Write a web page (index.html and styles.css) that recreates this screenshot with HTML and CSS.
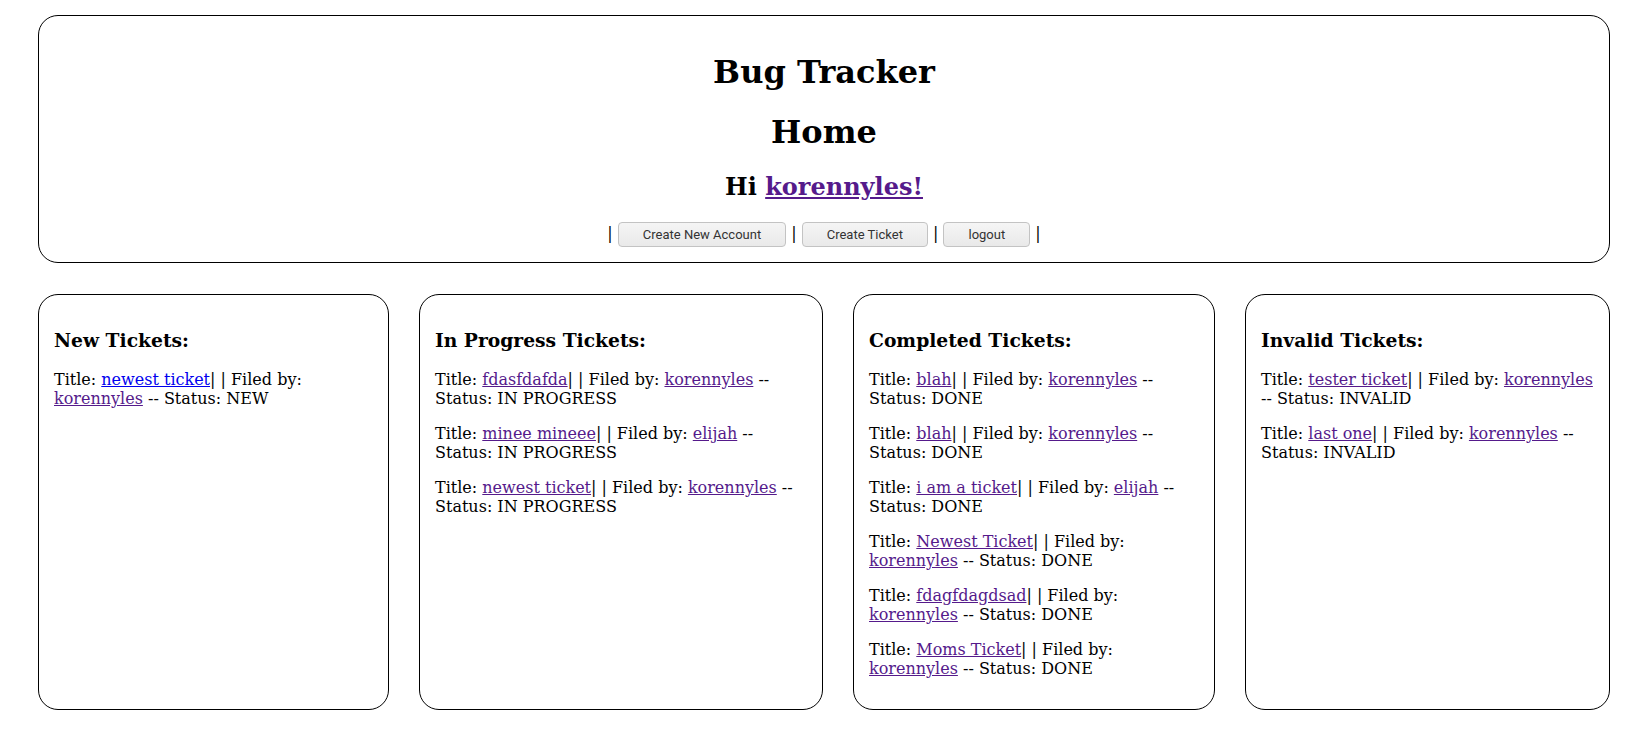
FILE: index.html
```html
<!DOCTYPE html>
<html>
<head>
<meta charset="utf-8">
<title>Bug Tracker</title>
<link rel="stylesheet" href="styles.css">
</head>
<body>
<div class="page">
  <header class="header">
    <h1>Bug Tracker</h1>
    <h1>Home</h1>
    <h2>Hi <a class="visited" href="#">korennyles!</a></h2>
    <div class="nav">| <button class="btn">Create New Account</button> | <button class="btn">Create Ticket</button> | <button class="btn">logout</button> |</div>
  </header>

  <div class="columns">
    <section class="card">
      <h3>New Tickets:</h3>
      <p>Title: <a class="fresh" href="#">newest ticket</a>| | Filed by: <a class="visited" href="#">korennyles</a> -- Status: NEW</p>
    </section>
    <section class="card">
      <h3>In Progress Tickets:</h3>
      <p>Title: <a class="visited" href="#">fdasfdafda</a>| | Filed by: <a class="visited" href="#">korennyles</a> -- Status: IN PROGRESS</p>
      <p>Title: <a class="visited" href="#">minee mineee</a>| | Filed by: <a class="visited" href="#">elijah</a> -- Status: IN PROGRESS</p>
      <p>Title: <a class="visited" href="#">newest ticket</a>| | Filed by: <a class="visited" href="#">korennyles</a> -- Status: IN PROGRESS</p>
    </section>
    <section class="card">
      <h3>Completed Tickets:</h3>
      <p>Title: <a class="visited" href="#">blah</a>| | Filed by: <a class="visited" href="#">korennyles</a> -- Status: DONE</p>
      <p>Title: <a class="visited" href="#">blah</a>| | Filed by: <a class="visited" href="#">korennyles</a> -- Status: DONE</p>
      <p>Title: <a class="visited" href="#">i am a ticket</a>| | Filed by: <a class="visited" href="#">elijah</a> -- Status: DONE</p>
      <p>Title: <a class="visited" href="#">Newest Ticket</a>| | Filed by: <a class="visited" href="#">korennyles</a> -- Status: DONE</p>
      <p>Title: <a class="visited" href="#">fdagfdagdsad</a>| | Filed by: <a class="visited" href="#">korennyles</a> -- Status: DONE</p>
      <p>Title: <a class="visited" href="#">Moms Ticket</a>| | Filed by: <a class="visited" href="#">korennyles</a> -- Status: DONE</p>
    </section>
    <section class="card">
      <h3>Invalid Tickets:</h3>
      <p>Title: <a class="visited" href="#">tester ticket</a>| | Filed by: <a class="visited" href="#">korennyles</a> -- Status: INVALID</p>
      <p>Title: <a class="visited" href="#">last one</a>| | Filed by: <a class="visited" href="#">korennyles</a> -- Status: INVALID</p>
    </section>
  </div>
</div>
</body>
</html>
```

FILE: styles.css
```css
html, body {
  background: #ffffff;
}

body {
  margin: 0;
  font-family: "DejaVu Serif", serif;
  font-size: 16px;
  color: #000000;
}

.page {
  width: 1572px;
  padding: 15px 0 0 38px;
}

.header {
  border: 1px solid #000000;
  border-radius: 20px;
  padding: 16px 16px 15px;
  text-align: center;
}

.header h1 {
  font-size: 32px;
  font-weight: bold;
  margin: 21.44px 0;
}

.header h2 {
  font-size: 24px;
  font-weight: bold;
  margin: 19.92px 0;
}

.nav {
  line-height: 25px;
  margin: 0;
}

.btn {
  font-family: "Roboto", "Noto Sans", sans-serif;
  font-size: 13px;
  color: #333333;
  background: linear-gradient(#f5f5f5, #e9e9e9);
  border: 1px solid #c3c3c3;
  border-radius: 4px;
  height: 25px;
  padding: 0 24px;
  margin: 0;
  vertical-align: middle;
}

a.visited {
  color: #551a8b;
  text-decoration: underline;
}

a.fresh {
  color: #0000ee;
  text-decoration: underline;
}

.columns {
  display: grid;
  grid-template-columns: 351px 404px 362px 365px;
  column-gap: 30px;
  margin-top: 31px;
}

.card {
  border: 1px solid #000000;
  border-radius: 20px;
  padding: 15px 15px 15px 15px;
}

.card h3 {
  font-size: 18.72px;
  font-weight: bold;
  margin: 18.72px 0;
}

.card p {
  margin: 16px 0;
  line-height: 19px;
}
```
